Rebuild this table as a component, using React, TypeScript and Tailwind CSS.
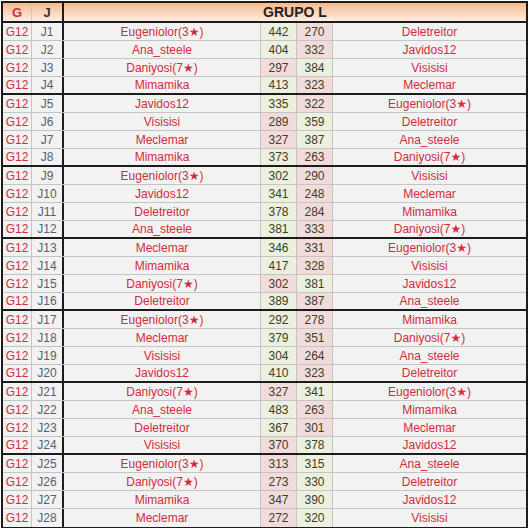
const rows: [string, number, number, string][] = [
  ["Eugeniolor(3★)", 442, 270, "Deletreitor"],
  ["Ana_steele", 404, 332, "Javidos12"],
  ["Daniyosi(7★)", 297, 384, "Visisisi"],
  ["Mimamika", 413, 323, "Meclemar"],
  ["Javidos12", 335, 322, "Eugeniolor(3★)"],
  ["Visisisi", 289, 359, "Deletreitor"],
  ["Meclemar", 327, 387, "Ana_steele"],
  ["Mimamika", 373, 263, "Daniyosi(7★)"],
  ["Eugeniolor(3★)", 302, 290, "Visisisi"],
  ["Javidos12", 341, 248, "Meclemar"],
  ["Deletreitor", 378, 284, "Mimamika"],
  ["Ana_steele", 381, 333, "Daniyosi(7★)"],
  ["Meclemar", 346, 331, "Eugeniolor(3★)"],
  ["Mimamika", 417, 328, "Visisisi"],
  ["Daniyosi(7★)", 302, 381, "Javidos12"],
  ["Deletreitor", 389, 387, "Ana_steele"],
  ["Eugeniolor(3★)", 292, 278, "Mimamika"],
  ["Meclemar", 379, 351, "Daniyosi(7★)"],
  ["Visisisi", 304, 264, "Ana_steele"],
  ["Javidos12", 410, 323, "Deletreitor"],
  ["Daniyosi(7★)", 327, 341, "Eugeniolor(3★)"],
  ["Ana_steele", 483, 263, "Mimamika"],
  ["Deletreitor", 367, 301, "Meclemar"],
  ["Visisisi", 370, 378, "Javidos12"],
  ["Eugeniolor(3★)", 313, 315, "Ana_steele"],
  ["Daniyosi(7★)", 273, 330, "Deletreitor"],
  ["Mimamika", 347, 390, "Javidos12"],
  ["Meclemar", 272, 320, "Visisisi"],
];

// G | J | name | score | score | name
const cols = "grid grid-cols-[29px_32px_197px_36px_36px_193px]";
const win = "bg-[#ebf1de]";
const lose = "bg-[#f2dcdb]";

const App = () => {
  return (
    <div
      className="m-[1px] w-[527px] border-2 border-[#1c1c1c] bg-[#f2f2f2] text-[12px] leading-none"
      style={{ fontFamily: '"Liberation Sans", "DejaVu Sans", sans-serif' }}
    >
      <div className={`${cols} h-[20px] border-b-2 border-[#1c1c1c] bg-gradient-to-b from-[#f7b98c] to-[#fdeee3] font-bold`}>
        <div className="flex items-center justify-center border-r border-[#c8c8c8] text-[13px] text-[#c9303c]">G</div>
        <div className="flex items-center justify-center border-r-2 border-[#1c1c1c] text-[13px] text-[#2e3440]">J</div>
        <div className="col-span-4 flex items-center justify-center text-[14px] text-[#222]">GRUPO L</div>
      </div>
      {rows.map(([a, s1, s2, b], i) => {
        const last = i === rows.length - 1;
        const sep = (i + 1) % 4 === 0 && !last;
        return (
          <div
            key={i}
            className={`${cols} h-[18px] ${
              last ? "" : sep ? "border-b-2 border-[#1c1c1c]" : "border-b border-[#c4c4c4]"
            }`}
          >
            <div className="flex items-center justify-center border-r border-[#c4c4c4] text-[#cf2e3e]">G12</div>
            <div className="flex items-center justify-center border-r-2 border-[#1c1c1c] text-[#56606e]">J{i + 1}</div>
            <div className="flex items-center justify-center border-r border-[#c4c4c4] text-[#d02c3c]">{a}</div>
            <div className={`flex items-center justify-center border-r border-[#c4c4c4] text-[#403d27] ${s1 > s2 ? win : lose}`}>
              {s1}
            </div>
            <div className={`flex items-center justify-center border-r border-[#c4c4c4] text-[#403d27] ${s2 > s1 ? win : lose}`}>
              {s2}
            </div>
            <div className="flex items-center justify-center text-[#d02c3c]">{b}</div>
          </div>
        );
      })}
    </div>
  );
};

export default App;
